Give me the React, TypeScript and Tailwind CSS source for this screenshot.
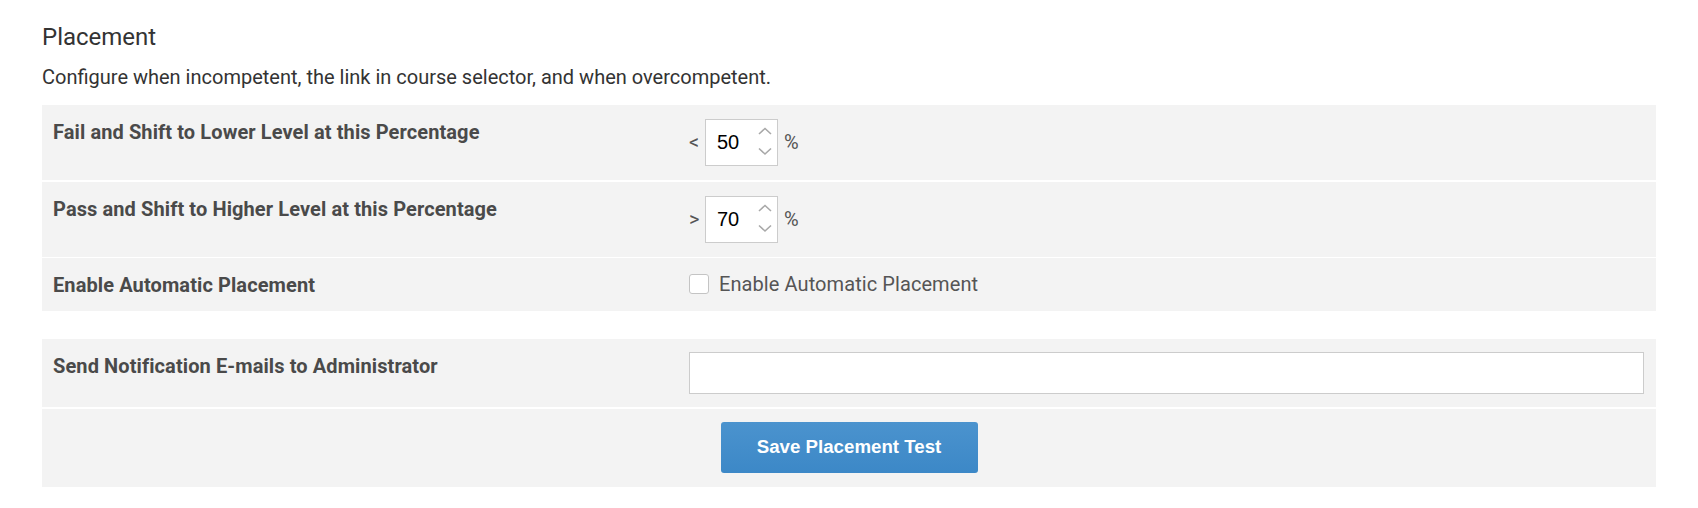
import { useState } from "react";

function Spinner() {
  return (
    <svg width="14" height="30" viewBox="0 0 14 30" className="text-[#a8a8a8]">
      <path d="M1 7 L7 1.5 L13 7" fill="none" stroke="currentColor" strokeWidth="1.6" />
      <path d="M1 21.5 L7 27 L13 21.5" fill="none" stroke="currentColor" strokeWidth="1.6" />
    </svg>
  );
}

function NumberBox({ sign, value }: { sign: string; value: string }) {
  return (
    <div className="flex items-center">
      <span className="w-[10px] text-[20px] leading-[28px] text-[#555]">{sign}</span>
      <div className="ml-[6px] flex h-[47px] w-[73px] items-center justify-between border border-[#cccccc] bg-white pl-[11px] pr-[5px]">
        <span className="font-['Liberation_Sans',Arial,sans-serif] text-[20px] text-black">{value}</span>
        <Spinner />
      </div>
      <span className="ml-[6px] text-[20px] leading-[28px] text-[#555]">%</span>
    </div>
  );
}

export default function App() {
  const [auto, setAuto] = useState(false);
  const rows = [
    { label: "Fail and Shift to Lower Level at this Percentage", sign: "<", value: "50" },
    { label: "Pass and Shift to Higher Level at this Percentage", sign: ">", value: "70" },
  ];
  return (
    <div className="bg-white px-[42px] pt-[23px] font-['Roboto',sans-serif]">
      <h2 className="text-[24px] leading-[28.8px] text-[#333]">Placement</h2>
      <p className="mt-[10px] text-[20px] leading-[30px] text-[#333]">
        Configure when incompetent, the link in course selector, and when overcompetent.
      </p>

      <div className="mt-[13px] flex flex-col">
        {rows.map((r, idx) => (
          <div
            key={r.label}
            className={`flex bg-[#f3f3f3] ${idx === 0 ? "mb-[2px]" : "mb-[1px]"}`}
          >
            <div className="w-[647px] pl-[11px] pt-[13px] text-[20px] font-bold leading-[28px] tracking-[0.1px] text-[#4a4a4a]">
              {r.label}
            </div>
            <div className="flex flex-1 items-center py-[14px]">
              <NumberBox sign={r.sign} value={r.value} />
            </div>
          </div>
        ))}

        <div className="mb-[28px] flex bg-[#f3f3f3]">
          <div className="w-[647px] pb-[12px] pl-[11px] pt-[13px] text-[20px] font-bold leading-[28px] tracking-[0.1px] text-[#4a4a4a]">
            Enable Automatic Placement
          </div>
          <label className="flex flex-1 cursor-pointer items-center gap-[10px]">
            <span
              onClick={() => setAuto(!auto)}
              className="flex h-[20px] w-[20px] items-center justify-center rounded-[3px] border border-[#c4c4c4] bg-white"
            >
              {auto && (
                <svg width="14" height="14" viewBox="0 0 14 14">
                  <path d="M2 7 L6 11 L12 3" fill="none" stroke="#333" strokeWidth="2" />
                </svg>
              )}
            </span>
            <span className="text-[20px] leading-[28px] tracking-[0.08px] text-[#555]">Enable Automatic Placement</span>
          </label>
        </div>

        <div className="mb-[2px] flex bg-[#f3f3f3]">
          <div className="w-[647px] pl-[11px] pt-[13px] text-[20px] font-bold leading-[28px] tracking-[0.1px] text-[#4a4a4a]">
            Send Notification E-mails to Administrator
          </div>
          <div className="flex flex-1 items-center py-[13px] pr-[12px]">
            <input
              type="text"
              className="h-[42px] w-full border border-[#cccccc] bg-white px-3 text-[18px] outline-none"
            />
          </div>
        </div>

        <div className="flex justify-center bg-[#f3f3f3] pb-[14px] pt-[13px]">
          <button className="h-[51px] w-[257px] rounded-[3px] bg-gradient-to-b from-[#4b93ce] to-[#3c88c7] font-['Liberation_Sans',Arial,sans-serif] text-[18.7px] font-bold text-white">
            Save Placement Test
          </button>
        </div>
      </div>
    </div>
  );
}
